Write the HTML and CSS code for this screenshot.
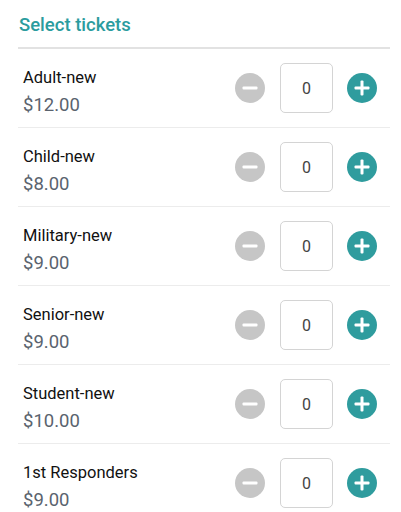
FILE: index.html
```html
<!DOCTYPE html>
<html>
<head>
<meta charset="utf-8">
<link rel="stylesheet" href="styles.css">
</head>
<body>
<div class="panel">
  <h2 class="title">Select tickets</h2>
  <div class="list">
    <div class="row">
      <div class="info"><div class="name">Adult-new</div><div class="price">$12.00</div></div>
      <div class="qty">
        <button class="btn minus"><svg viewBox="0 0 30 30" width="30" height="30"><circle cx="15" cy="15" r="15" fill="#c6c6c6"/><rect x="7.5" y="13.5" width="15" height="3" rx="1" fill="#fff"/></svg></button>
        <div class="count">0</div>
        <button class="btn plus"><svg viewBox="0 0 30 30" width="30" height="30"><circle cx="15" cy="15" r="15" fill="#2f9c9e"/><rect x="7.5" y="13.5" width="15" height="3" rx="1" fill="#fff"/><rect x="13.5" y="7.5" width="3" height="15" rx="1" fill="#fff"/></svg></button>
      </div>
    </div>
    <div class="row">
      <div class="info"><div class="name">Child-new</div><div class="price">$8.00</div></div>
      <div class="qty">
        <button class="btn minus"><svg viewBox="0 0 30 30" width="30" height="30"><circle cx="15" cy="15" r="15" fill="#c6c6c6"/><rect x="7.5" y="13.5" width="15" height="3" rx="1" fill="#fff"/></svg></button>
        <div class="count">0</div>
        <button class="btn plus"><svg viewBox="0 0 30 30" width="30" height="30"><circle cx="15" cy="15" r="15" fill="#2f9c9e"/><rect x="7.5" y="13.5" width="15" height="3" rx="1" fill="#fff"/><rect x="13.5" y="7.5" width="3" height="15" rx="1" fill="#fff"/></svg></button>
      </div>
    </div>
    <div class="row">
      <div class="info"><div class="name">Military-new</div><div class="price">$9.00</div></div>
      <div class="qty">
        <button class="btn minus"><svg viewBox="0 0 30 30" width="30" height="30"><circle cx="15" cy="15" r="15" fill="#c6c6c6"/><rect x="7.5" y="13.5" width="15" height="3" rx="1" fill="#fff"/></svg></button>
        <div class="count">0</div>
        <button class="btn plus"><svg viewBox="0 0 30 30" width="30" height="30"><circle cx="15" cy="15" r="15" fill="#2f9c9e"/><rect x="7.5" y="13.5" width="15" height="3" rx="1" fill="#fff"/><rect x="13.5" y="7.5" width="3" height="15" rx="1" fill="#fff"/></svg></button>
      </div>
    </div>
    <div class="row">
      <div class="info"><div class="name">Senior-new</div><div class="price">$9.00</div></div>
      <div class="qty">
        <button class="btn minus"><svg viewBox="0 0 30 30" width="30" height="30"><circle cx="15" cy="15" r="15" fill="#c6c6c6"/><rect x="7.5" y="13.5" width="15" height="3" rx="1" fill="#fff"/></svg></button>
        <div class="count">0</div>
        <button class="btn plus"><svg viewBox="0 0 30 30" width="30" height="30"><circle cx="15" cy="15" r="15" fill="#2f9c9e"/><rect x="7.5" y="13.5" width="15" height="3" rx="1" fill="#fff"/><rect x="13.5" y="7.5" width="3" height="15" rx="1" fill="#fff"/></svg></button>
      </div>
    </div>
    <div class="row">
      <div class="info"><div class="name">Student-new</div><div class="price">$10.00</div></div>
      <div class="qty">
        <button class="btn minus"><svg viewBox="0 0 30 30" width="30" height="30"><circle cx="15" cy="15" r="15" fill="#c6c6c6"/><rect x="7.5" y="13.5" width="15" height="3" rx="1" fill="#fff"/></svg></button>
        <div class="count">0</div>
        <button class="btn plus"><svg viewBox="0 0 30 30" width="30" height="30"><circle cx="15" cy="15" r="15" fill="#2f9c9e"/><rect x="7.5" y="13.5" width="15" height="3" rx="1" fill="#fff"/><rect x="13.5" y="7.5" width="3" height="15" rx="1" fill="#fff"/></svg></button>
      </div>
    </div>
    <div class="row">
      <div class="info"><div class="name">1st Responders</div><div class="price">$9.00</div></div>
      <div class="qty">
        <button class="btn minus"><svg viewBox="0 0 30 30" width="30" height="30"><circle cx="15" cy="15" r="15" fill="#c6c6c6"/><rect x="7.5" y="13.5" width="15" height="3" rx="1" fill="#fff"/></svg></button>
        <div class="count">0</div>
        <button class="btn plus"><svg viewBox="0 0 30 30" width="30" height="30"><circle cx="15" cy="15" r="15" fill="#2f9c9e"/><rect x="7.5" y="13.5" width="15" height="3" rx="1" fill="#fff"/><rect x="13.5" y="7.5" width="3" height="15" rx="1" fill="#fff"/></svg></button>
      </div>
    </div>
  </div>
</div>
</body>
</html>
```
FILE: styles.css
```css
html, body {
  margin: 0;
  padding: 0;
  background: #fff;
}
body {
  font-family: Roboto, "Liberation Sans", sans-serif;
  color: #1a1a1a;
}
.panel {
  margin: 0 11px 0 18px;
}
.title {
  margin: 0;
  padding: 13px 0 10px 1px;
  font-size: 18.5px;
  line-height: 24px;
  font-weight: 500;
  color: #2b9c9e;
  border-bottom: 2px solid #e2e2e2;
}
.row {
  display: flex;
  align-items: center;
  justify-content: space-between;
  height: 78px;
  padding: 0 13px 0 5px;
  border-bottom: 1px solid #ececec;
}
.info {
  padding-top: 10px;
}
.name {
  font-size: 16.5px;
  line-height: 22px;
  color: #111;
}
.price {
  margin-top: 2px;
  font-size: 18.5px;
  line-height: 28px;
  color: #5a636e;
}
.qty {
  display: flex;
  align-items: center;
}
.btn {
  display: block;
  width: 30px;
  height: 30px;
  padding: 0;
  margin: 0;
  border: 0;
  background: none;
}
.btn svg {
  display: block;
}
.count {
  box-sizing: border-box;
  width: 53px;
  height: 50px;
  margin: 0 14px 0 15px;
  border: 1px solid #d4d4d4;
  border-radius: 5px;
  display: flex;
  align-items: center;
  justify-content: center;
  font-size: 16px;
  color: #444;
}
```
